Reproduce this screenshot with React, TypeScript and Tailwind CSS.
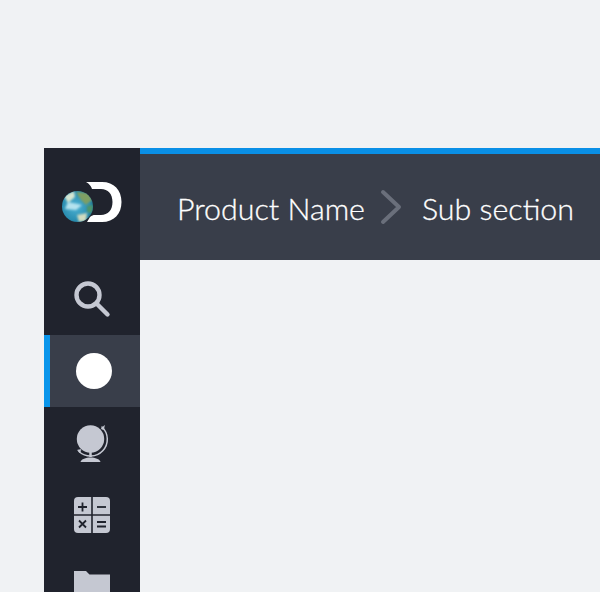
const SearchIcon = () => (
  <svg width="38" height="38" viewBox="0 0 38 38" fill="none" stroke="#c5c8d2" strokeLinecap="round">
    <circle cx="15" cy="15" r="11.5" strokeWidth="4.4" />
    <path d="M24 24 L34.5 34.5" strokeWidth="4.4" />
  </svg>
);

const GlobeIcon = () => (
  <svg width="34" height="38" viewBox="0 0 34 38" fill="none" stroke="#c5c8d2">
    <circle cx="15.5" cy="15" r="13.7" fill="#c5c8d2" stroke="none" />
    <path d="M27 3 A 16.5 16.5 0 0 1 4 27.5" strokeWidth="1.5" strokeLinecap="round" />
    <path d="M26 4.5 L29.5 1.5 L28.5 6 Z" fill="#c5c8d2" strokeWidth="0.5" />
    <path d="M2.5 26 L6 25.5 L5 29 Z" fill="#c5c8d2" strokeWidth="0.5" />
    <path d="M15.5 28 L15.5 33" strokeWidth="2.5" />
    <path d="M5.5 38 C7 32 24 32 25.5 38 Z" fill="#c5c8d2" stroke="none" />
  </svg>
);

const CalcIcon = () => (
  <svg width="36" height="36" viewBox="0 0 36 36" fill="none">
    <path d="M4 0 H17.2 V17.2 H0 V4 A4 4 0 0 1 4 0 Z" fill="#c5c8d2" />
    <path d="M18.8 0 H32 A4 4 0 0 1 36 4 V17.2 H18.8 Z" fill="#c5c8d2" />
    <path d="M0 18.8 H17.2 V36 H4 A4 4 0 0 1 0 32 Z" fill="#c5c8d2" />
    <path d="M18.8 18.8 H36 V32 A4 4 0 0 1 32 36 H18.8 Z" fill="#c5c8d2" />
    <g stroke="#20232d" strokeWidth="1.8">
      <path d="M4 10 H13 M8.5 5.5 V14.5" />
      <path d="M23 10 H32" />
      <path d="M5 23.5 L12 30.5 M12 23.5 L5 30.5" />
      <path d="M23 25 H32 M23 29.5 H32" />
    </g>
  </svg>
);

const FolderIcon = () => (
  <svg width="36" height="30" viewBox="0 0 36 30" className="block">
    <path d="M0 0 H12 L15.5 3.5 H36 V30 H0 Z" fill="#c5c8d2" />
  </svg>
);

const Logo = () => (
  <svg width="62" height="42" viewBox="0 0 62 42">
    <defs>
      <radialGradient id="earth" cx="45%" cy="50%" r="60%">
        <stop offset="0%" stopColor="#4fb3d4" />
        <stop offset="75%" stopColor="#2a8db0" />
        <stop offset="100%" stopColor="#1d6a84" />
      </radialGradient>
      <clipPath id="earthClip">
        <circle cx="15.5" cy="25.5" r="15.5" />
      </clipPath>
      <filter id="soft">
        <feGaussianBlur stdDeviation="0.8" />
      </filter>
    </defs>
    <path
      d="M24 1 H40 C52 1 59.5 9 59.5 21 C59.5 33 52 41 40 41 H25 L28 36 C30 34.5 31 34 33 34 H39 C46 34 50.5 29 50.5 21 C50.5 13 46 8 39 8 H30 C29 5 27 2.5 24 1 Z"
      fill="#ffffff"
    />
    <circle cx="15.5" cy="25.5" r="15.5" fill="url(#earth)" />
    <g clipPath="url(#earthClip)" filter="url(#soft)">
      <path d="M2 15 L12 10 L13 16 L6 22 Z" fill="#d6e6d2" />
      <path d="M14 11 L27 12 L30 19 L24 24 L19 19 Z" fill="#7f9f63" />
      <path d="M6 21 L20 24 L14 29 L3 28 Z" fill="#b4e2ee" />
      <path d="M15 34 L25 32 L24 40 L17 41 Z" fill="#d2dcc0" />
      <path d="M25 25 L31 24 L30 32 L25 31 Z" fill="#4f9468" />
    </g>
  </svg>
);

const navItems = [
  { key: "search", icon: <SearchIcon /> },
  { key: "active", icon: <div className="size-[36px] rounded-full bg-white" />, active: true },
  { key: "globe", icon: <GlobeIcon /> },
  { key: "calc", icon: <CalcIcon /> },
];

export default function App() {
  return (
    <div className="h-[592px] overflow-hidden bg-[#f0f2f4] pt-[148px] pl-11 font-['Lato',sans-serif]">
      <div className="flex h-[444px]">
        <aside className="w-24 shrink-0 bg-[#20232d]">
          <div className="flex h-[115px] items-start pt-[33px] pl-[18px]">
            <Logo />
          </div>
          {navItems.map((item) => (
            <div
              key={item.key}
              className={
                item.active
                  ? "flex h-[72px] items-center justify-center border-l-[6px] border-[#0a96eb] bg-[#393e4a] pr-[3px]"
                  : "flex h-[72px] items-center justify-center"
              }
            >
              {item.icon}
            </div>
          ))}
          <div className="flex h-[72px] justify-center pt-5">
            <FolderIcon />
          </div>
        </aside>

        <main className="flex-1">
          <header className="flex h-28 items-center gap-[15px] border-t-[6px] border-[#0a8fe6] bg-[#393e4a] pt-[4px] pl-[37px] text-[30.4px] font-light whitespace-nowrap text-white [-webkit-text-stroke:0.3px_#ffffff]">
            <span>Product Name</span>
            <svg width="22" height="36" viewBox="0 0 22 36" fill="none" stroke="#6a6f7b" strokeWidth="4" strokeLinecap="round" strokeLinejoin="round" className="-mt-[4px]">
              <path d="M3 3 L19 18 L3 33" />
            </svg>
            <span className="ml-[5px]">Sub section</span>
          </header>
        </main>
      </div>
    </div>
  );
}
